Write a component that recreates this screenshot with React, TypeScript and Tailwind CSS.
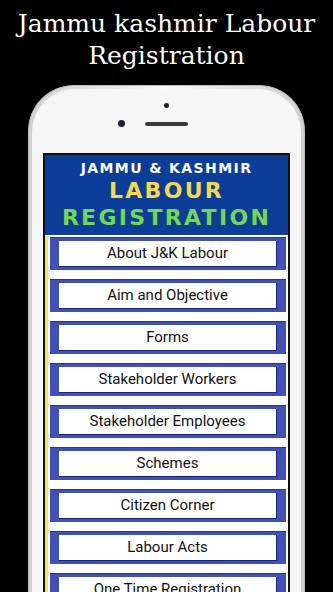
import React from 'react'

const items = [
  'About J&K Labour',
  'Aim and Objective',
  'Forms',
  'Stakeholder Workers',
  'Stakeholder Employees',
  'Schemes',
  'Citizen Corner',
  'Labour Acts',
  'One Time Registration',
]

export default function App() {
  return (
    <div className="h-[592px] w-[333px] overflow-hidden bg-black">
      {/* title */}
      <div className="pt-[8px] text-center text-[25px] leading-[32px] text-white" style={{ fontFamily: '"DejaVu Serif", serif' }}>
        <div>Jammu kashmir Labour</div>
        <div>Registration</div>
      </div>

      {/* phone */}
      <div className="mx-[28px] mt-[13px] h-[600px] rounded-t-[46px] border-t border-x border-[#bdbdbd] bg-gradient-to-r from-[#d0d0d0] via-[#fafafa] to-[#d0d0d0] p-[3px] pb-0">
        <div className="h-full rounded-t-[43px] bg-[#f6f6f6] px-[11px] pt-[14px]">
          <div className="flex justify-center">
            <div className="h-[5px] w-[5px] rounded-full bg-[#222]" />
          </div>
          <div className="mt-[12px] flex items-center justify-center gap-[20px]">
            <div className="h-[7px] w-[7px] rounded-full bg-[#1b1f3a]" />
            <div className="h-[4px] w-[43px] rounded-full bg-[#3a3a3a]" />
            <div className="h-[7px] w-[7px]" />
          </div>

          {/* screen */}
          <div className="mt-[26px] h-[500px] border-2 border-b-0 border-[#111] bg-white">
            <div className="flex h-[80px] flex-col items-center bg-[#0c3e99] pt-[4px]" style={{ fontFamily: '"DejaVu Sans", sans-serif' }}>
              <div className="text-[14px] font-bold leading-[18px] tracking-[1.4px] text-white">JAMMU &amp; KASHMIR</div>
              <div className="mt-[1px] text-[22px] font-bold leading-[26px] tracking-[2.3px] text-[#f6d84c]">LABOUR</div>
              <div className="mt-[1px] text-[22px] font-bold leading-[26px] tracking-[2.3px] text-[#72d94f]">REGISTRATION</div>
            </div>
            <div className="flex">
              <div className="w-[3px] bg-[#f3e85a]" />
              <div className="flex flex-1 flex-col gap-[9px] pl-[2px] pr-[2px] pt-[2px]" style={{ fontFamily: 'Roboto, sans-serif' }}>
                {items.map((t) => (
                  <div key={t} className="h-[33px] border-t border-[#283593] bg-[#3f51b5] px-[9px] pb-[3px] pt-[3px]">
                    <div className="flex h-full items-center justify-center border-b border-r border-[#1a237e] bg-white text-[15px] text-[#111]">
                      {t}
                    </div>
                  </div>
                ))}
              </div>
            </div>
          </div>
        </div>
      </div>
    </div>
  )
}
